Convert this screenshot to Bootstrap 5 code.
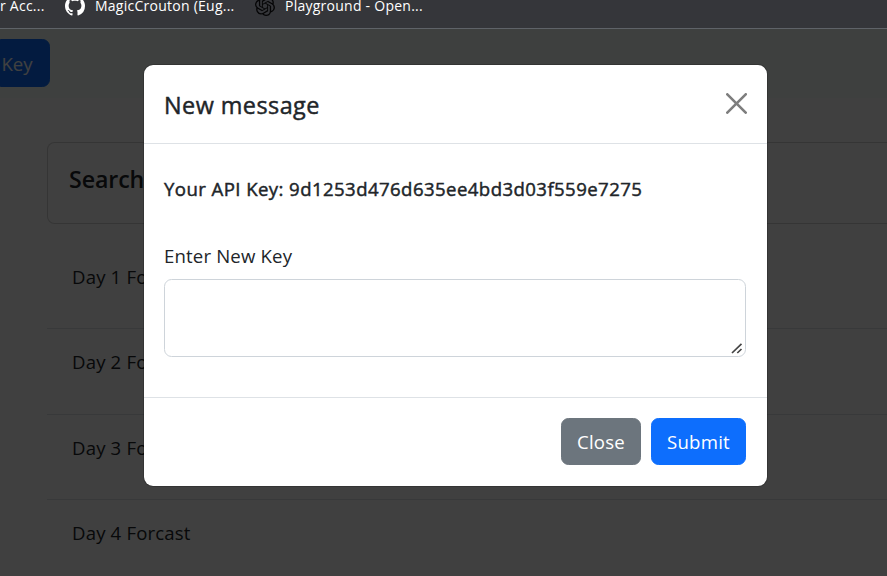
<!DOCTYPE html>
<html lang="en">
<head>
<meta charset="utf-8">
<meta name="viewport" content="width=device-width, initial-scale=1">
<title>Weather Forecast</title>
<link href="https://cdn.jsdelivr.net/npm/bootstrap@5.3.0/dist/css/bootstrap.min.css" rel="stylesheet">
<style>
html { font-size: 20px; }
body { font-family: "Open Sans", "Noto Sans", sans-serif; font-size: 18.6px; letter-spacing: .16px; height: 576px; overflow: hidden; }
.bookmarks { height: 29px; background: #35363a; border-bottom: 1px solid #5f6368; color: #fff; font-size: 14px; letter-spacing: .25px; line-height: 20px; white-space: nowrap; overflow: hidden; }
.bookmark { height: 20px; margin-top: -4px; gap: 10px; }
.bm-one { width: 65px; }
.bm-two { width: 190px; }
.page-view { height: 547px; overflow: hidden; }
.top-nav { height: 69px; background: #f5fff9; padding: 10px 0; }
.key-btn { width: 50px; height: 48px; padding: 1px 16px 0 0; border-radius: 7.5px; font-size: 18.6px; direction: rtl; }
.main-area { padding: 44px 0 0 47px; width: 940px; }
.search-card { height: 82px; border-radius: 7.5px; padding: 18px 21px; }
.search-card h5 { font-size: 23.2px; line-height: 36px; font-weight: 600; letter-spacing: -.1px; }
.days { margin-top: 20px; }
.days .list-group-item { height: 85.4px; padding: 18px 25px 0; line-height: 30px; }
.shade { background: rgba(0,0,0,.75); z-index: 10; }
.dialog-layer { position: absolute; z-index: 20; inset: 35px auto auto 143px; width: 625px; height: auto; overflow: visible; }
.dialog-layer .modal-dialog { margin: 0; max-width: none; }
.dialog-layer .modal-content { border-radius: 10px; }
.dialog-layer .modal-header { padding: 20px 21px 20px 20px; height: 79px; }
.dialog-layer .btn-close { background-size: 21px; margin-right: -9.5px; margin-top: -10.5px; }
.dialog-layer .modal-title { font-size: 23.4px; line-height: 37px; font-weight: 400; letter-spacing: .45px; padding-top: 2px; -webkit-text-stroke: .45px currentColor; }
.dialog-layer .modal-body { height: 253px; padding: 30px 21px 0 20px; }
.dialog-layer .modal-footer { padding: 19px 21px 21px 20px; height: 89px; gap: 10px; }
.dialog-layer .modal-footer .btn { margin: 0; height: 47px; font-size: 18.6px; line-height: 30px; border-radius: 7.5px; padding: 8px 0 6px; letter-spacing: .25px; }
.close-wide { width: 80px; }
.submit-wide { width: 95px; }
.key-line { font-size: 18.6px; line-height: 30px; font-weight: 400; letter-spacing: .42px; margin-bottom: 37px; -webkit-text-stroke: .45px currentColor; }
.key-label { line-height: 30px; margin-bottom: 8px; }
.key-input { height: 78px; border-radius: 7.5px; border-color: #ced4da; resize: none; }
.grip { position: absolute; right: 3px; bottom: 3px; }
</style>
<script src="https://cdn.jsdelivr.net/npm/bootstrap@5.3.0/dist/js/bootstrap.bundle.min.js"></script>
</head>
<body>
<div class="bookmarks d-flex align-items-start">
  <div class="bookmark bm-one d-flex"><span>r Acc...</span></div>
  <div class="bookmark bm-two d-flex">
    <svg width="20" height="20" viewBox="0 0 16 16" fill="#fff"><path d="M8 0C3.58 0 0 3.58 0 8c0 3.54 2.29 6.53 5.47 7.59.4.07.55-.17.55-.38 0-.19-.01-.82-.01-1.49-2.01.37-2.53-.49-2.69-.94-.09-.23-.48-.94-.82-1.13-.28-.15-.68-.52-.01-.53.63-.01 1.08.58 1.23.82.72 1.21 1.87.87 2.33.66.07-.52.28-.87.51-1.07-1.78-.2-3.64-.89-3.64-3.95 0-.87.31-1.59.82-2.15-.08-.2-.36-1.02.08-2.12 0 0 .67-.21 2.2.82.64-.18 1.32-.27 2-.27s1.36.09 2 .27c1.53-1.04 2.2-.82 2.2-.82.44 1.1.16 1.92.08 2.12.51.56.82 1.27.82 2.15 0 3.07-1.87 3.75-3.65 3.95.29.25.54.73.54 1.48 0 1.07-.01 1.93-.01 2.2 0 .21.15.46.55.38A8.01 8.01 0 0 0 16 8c0-4.42-3.58-8-8-8"/></svg>
    <span>MagicCrouton (Eug...</span>
  </div>
  <div class="bookmark d-flex">
    <svg width="20" height="20" viewBox="0 0 24 24" fill="#050506"><path d="M22.2819 9.8211a5.9847 5.9847 0 0 0-.5157-4.9108 6.0462 6.0462 0 0 0-6.5098-2.9A6.0651 6.0651 0 0 0 4.9807 4.1818a5.9847 5.9847 0 0 0-3.9977 2.9 6.0462 6.0462 0 0 0 .7427 7.0966 5.98 5.98 0 0 0 .511 4.9107 6.051 6.051 0 0 0 6.5146 2.9001A5.9847 5.9847 0 0 0 13.2599 24a6.0557 6.0557 0 0 0 5.7718-4.2058 5.9894 5.9894 0 0 0 3.9977-2.9001 6.0557 6.0557 0 0 0-.7475-7.073zm-9.022 12.6081a4.4755 4.4755 0 0 1-2.8764-1.0408l.1419-.0804 4.7783-2.7582a.7948.7948 0 0 0 .3927-.6813v-6.7369l2.02 1.1686a.071.071 0 0 1 .038.052v5.5826a4.504 4.504 0 0 1-4.4945 4.4944zm-9.6607-4.1254a4.4708 4.4708 0 0 1-.5346-3.0137l.142.0852 4.783 2.7582a.7712.7712 0 0 0 .7806 0l5.8428-3.3685v2.3324a.0804.0804 0 0 1-.0332.0615L9.74 19.9502a4.4992 4.4992 0 0 1-6.1408-1.6464zM2.3408 7.8956a4.485 4.485 0 0 1 2.3655-1.9728V11.6a.7664.7664 0 0 0 .3879.6765l5.8144 3.3543-2.0201 1.1685a.0757.0757 0 0 1-.071 0l-4.8303-2.7865A4.504 4.504 0 0 1 2.3408 7.872zm16.5963 3.8558L13.1038 8.364 15.1192 7.2a.0757.0757 0 0 1 .071 0l4.8303 2.7913a4.4944 4.4944 0 0 1-.6765 8.1042v-5.6772a.79.79 0 0 0-.407-.667zm2.0107-3.0231l-.142-.0852-4.7735-2.7818a.7759.7759 0 0 0-.7854 0L9.409 9.2297V6.8974a.0662.0662 0 0 1 .0284-.0615l4.8303-2.7866a4.4992 4.4992 0 0 1 6.6802 4.66zM8.3065 12.863l-2.02-1.1638a.0804.0804 0 0 1-.038-.0567V6.0742a4.4992 4.4992 0 0 1 7.3757-3.4537l-.142.0805L8.704 5.459a.7948.7948 0 0 0-.3927.6813zm1.0976-2.3654l2.602-1.4998 2.6069 1.4998v2.9994l-2.5974 1.4997-2.6067-1.4997Z"/></svg>
    <span>Playground - Open...</span>
  </div>
</div>

<div class="page-view position-relative">
  <nav class="top-nav">
    <button class="btn btn-primary key-btn rounded-start-0 text-nowrap" type="button">Key</button>
  </nav>
  <main class="main-area">
    <section class="card search-card"><h5 class="mb-0">Search</h5></section>
    <ul class="list-group list-group-flush days">
      <li class="list-group-item">Day 1 Forcast</li>
      <li class="list-group-item">Day 2 Forcast</li>
      <li class="list-group-item">Day 3 Forcast</li>
      <li class="list-group-item">Day 4 Forcast</li>
    </ul>
  </main>

  <div class="shade position-absolute top-0 start-0 w-100 h-100"></div>

  <div class="modal d-block dialog-layer" role="dialog" aria-labelledby="dialogTitle">
    <div class="modal-dialog">
      <div class="modal-content">
        <div class="modal-header">
          <h1 class="modal-title" id="dialogTitle">New message</h1>
          <button type="button" class="btn-close" aria-label="Close"></button>
        </div>
        <div class="modal-body">
          <h6 class="key-line text-nowrap">Your API Key: 9d1253d476d635ee4bd3d03f559e7275</h6>
          <label for="newKey" class="key-label d-block">Enter New Key</label>
          <div class="position-relative">
            <textarea class="form-control key-input" id="newKey"></textarea>
            <svg class="grip" width="12" height="11" viewBox="0 0 12 11" fill="none" stroke="#444" stroke-width="1.7"><path d="M1 10 10.5 .8M6.3 10l4.2-4"/></svg>
          </div>
        </div>
        <div class="modal-footer">
          <button type="button" class="btn btn-secondary close-wide">Close</button>
          <button type="button" class="btn btn-primary submit-wide">Submit</button>
        </div>
      </div>
    </div>
  </div>
</div>
</body>
</html>
